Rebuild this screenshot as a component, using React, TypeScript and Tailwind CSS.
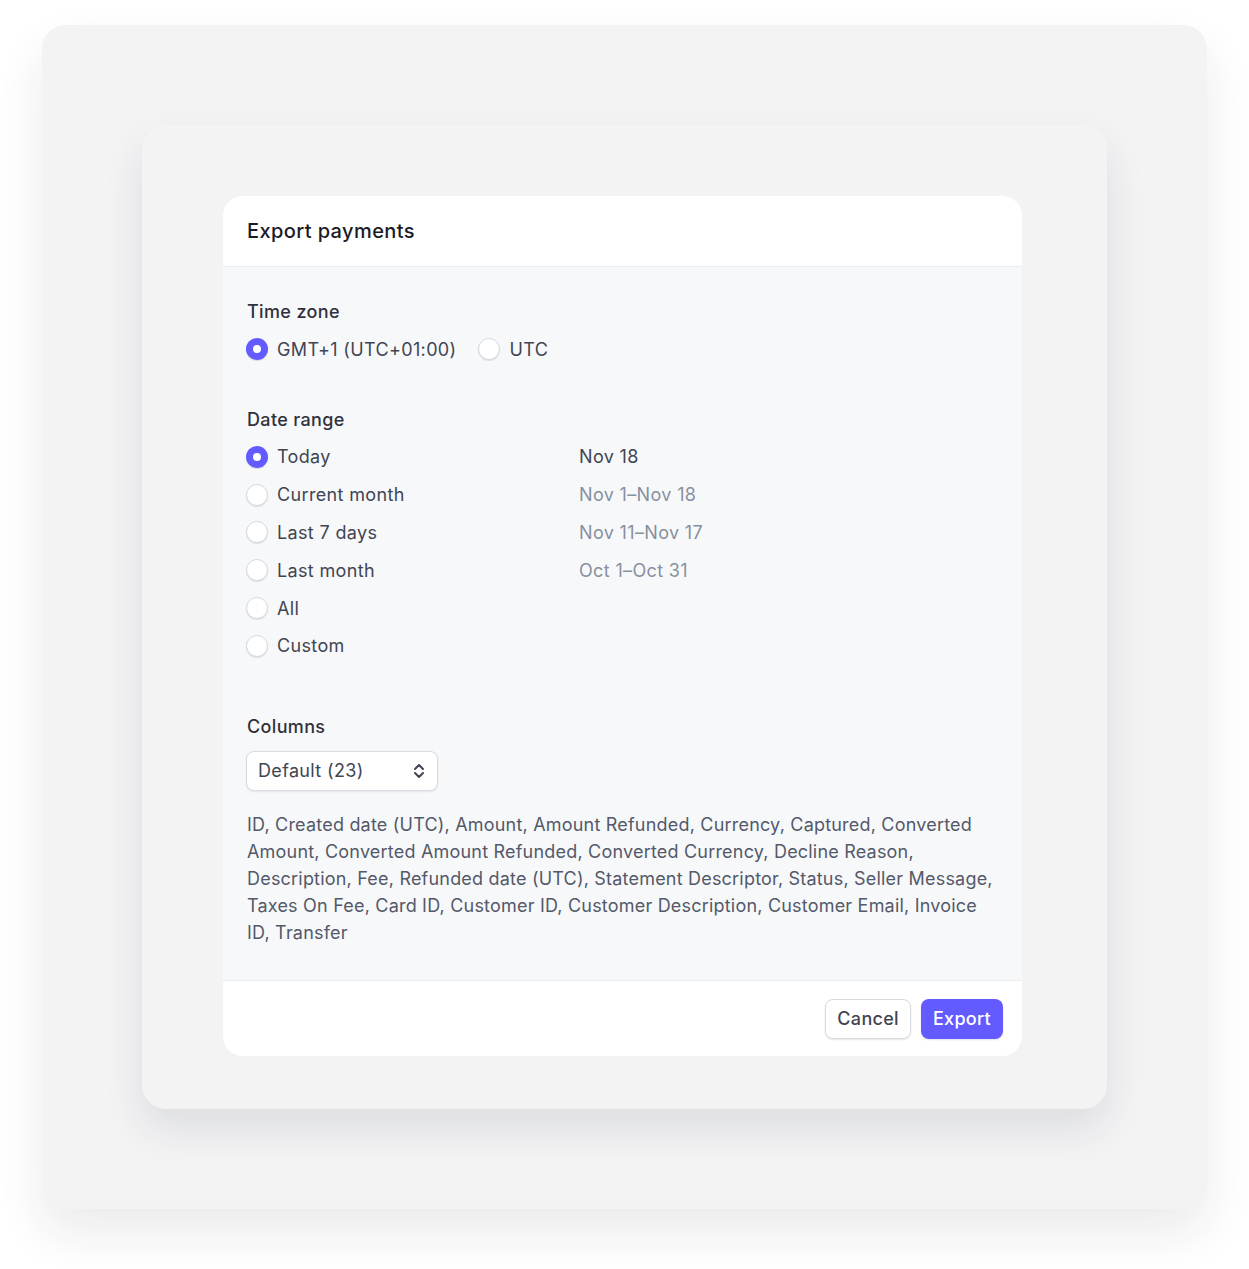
import { useState } from "react";

const ranges = [
  { id: "today", label: "Today", dates: "Nov 18" },
  { id: "month", label: "Current month", dates: "Nov 1–Nov 18" },
  { id: "7days", label: "Last 7 days", dates: "Nov 11–Nov 17" },
  { id: "lastmonth", label: "Last month", dates: "Oct 1–Oct 31" },
  { id: "all", label: "All", dates: "" },
  { id: "custom", label: "Custom", dates: "" },
];

const columnsText =
  "ID, Created date (UTC), Amount, Amount Refunded, Currency, Captured, Converted Amount, Converted Amount Refunded, Converted Currency, Decline Reason, Description, Fee, Refunded date (UTC), Statement Descriptor, Status, Seller Message, Taxes On Fee, Card ID, Customer ID, Customer Description, Customer Email, Invoice ID, Transfer";

const Radio = ({ checked }: { checked: boolean }) => {
  if (checked) {
    return (
      <span className="flex h-[22px] w-[22px] items-center justify-center rounded-full bg-[#635bff] shadow-[0_1px_1px_rgba(0,0,0,0.12)]">
        <span className="h-[8px] w-[8px] rounded-full bg-white" />
      </span>
    );
  }
  return (
    <span className="h-[22px] w-[22px] rounded-full border border-[#d5dbe1] bg-white shadow-[0_1px_1px_rgba(0,0,0,0.1)]" />
  );
};

const App = () => {
  const [zone, setZone] = useState("gmt");
  const [range, setRange] = useState("today");

  return (
    <div
      className="min-h-[1269px] bg-white px-[42px] pt-[25px] pb-[59px]"
      style={{ fontFamily: "Inter, 'Noto Sans', sans-serif" }}
    >
      <div className="rounded-[24px] bg-[#f3f3f4] px-[100px] pt-[100px] pb-[100px] shadow-[0_24px_48px_rgba(30,35,60,0.09)]">
        <div className="rounded-[24px] bg-[#f3f3f4] pt-[71px] pr-[85px] pb-[53px] pl-[81px] shadow-[0_20px_40px_rgba(30,35,60,0.1)]">
          <div className="overflow-hidden rounded-[20px] bg-[#f7f8fa]">
            {/* header */}
            <div className="flex h-[71px] items-center border-b border-[#ebeef1] bg-white px-[24px]">
              <h2 className="text-[20px] font-medium tracking-[0.4px] text-[#1a1b25]">Export payments</h2>
            </div>

            {/* body */}
            <div className="px-[24px] pt-[27px] pb-[34px] text-[18px] tracking-[0.35px]">
              <p className="leading-[36px] font-medium text-[#30313d]">Time zone</p>
              <div className="-ml-[1px] flex h-[38px] items-center gap-[22px]">
                <button className="flex items-center gap-[9px]" onClick={() => setZone("gmt")}>
                  <Radio checked={zone === "gmt"} />
                  <span className="text-[#414552]">GMT+1 (UTC+01:00)</span>
                </button>
                <button className="flex items-center gap-[9px]" onClick={() => setZone("utc")}>
                  <Radio checked={zone === "utc"} />
                  <span className="text-[#414552]">UTC</span>
                </button>
              </div>

              <p className="mt-[34px] leading-[36px] font-medium text-[#30313d]">Date range</p>
              <div className="-ml-[1px] flex flex-col">
                {ranges.map((r) => (
                  <button
                    key={r.id}
                    className="flex h-[37.8px] items-center text-left"
                    onClick={() => setRange(r.id)}
                  >
                    <span className="flex w-[333px] items-center gap-[9px]">
                      <Radio checked={range === r.id} />
                      <span className="text-[#414552]">{r.label}</span>
                    </span>
                    <span className={range === r.id ? "text-[#414552]" : "text-[#87909f]"}>
                      {r.dates}
                    </span>
                  </button>
                ))}
              </div>

              <p className="mt-[44px] leading-[36px] font-medium text-[#30313d]">Columns</p>
              <button className="mt-[6px] -ml-[1px] flex h-[40px] w-[192px] items-center justify-between rounded-[8px] border border-[#d5dbe1] bg-white pr-[12px] pl-[11px] shadow-[0_1px_2px_rgba(0,0,0,0.08)]">
                <span className="text-[#414552]">Default (23)</span>
                <svg width="12" height="16" viewBox="0 0 12 16" fill="none" stroke="#414552" strokeWidth="2" strokeLinecap="round" strokeLinejoin="round">
                  <path d="M2 6l4-4 4 4" />
                  <path d="M2 10l4 4 4-4" />
                </svg>
              </button>

              <p className="mt-[20px] leading-[27px] tracking-[0.2px] text-[#545969]">{columnsText}</p>
            </div>

            {/* footer */}
            <div className="flex items-center justify-end gap-[10px] border-t border-[#ebeef1] bg-white px-[19px] pt-[18px] pb-[17px]">
              <button className="h-[40px] rounded-[8px] border border-[#d5dbe1] bg-white px-[11px] text-[18px] font-medium tracking-[0.3px] text-[#414552] shadow-[0_1px_2px_rgba(0,0,0,0.1)]">
                Cancel
              </button>
              <button className="h-[40px] rounded-[8px] bg-[#635bff] px-[12px] text-[18px] font-medium tracking-[0.3px] text-white shadow-[0_1px_2px_rgba(0,0,0,0.12)]">
                Export
              </button>
            </div>
          </div>
        </div>
      </div>
    </div>
  );
};

export default App;
